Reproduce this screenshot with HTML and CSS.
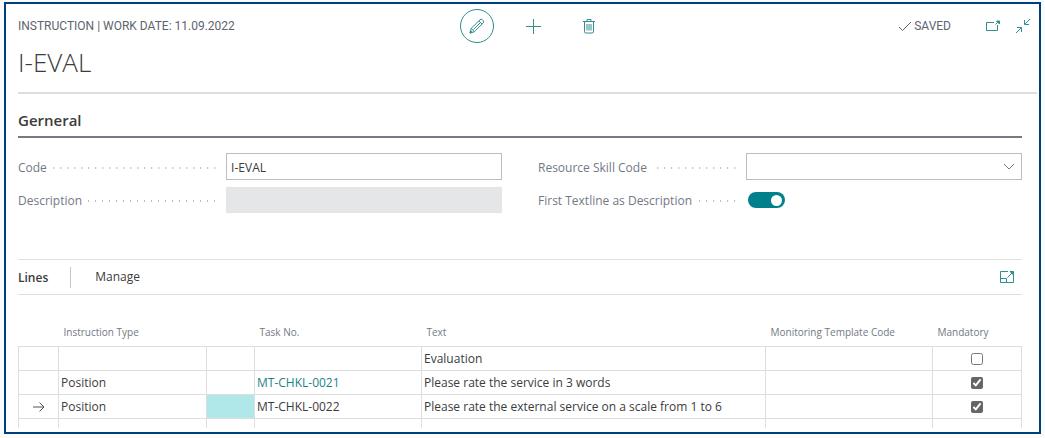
FILE: index.html
```html
<!DOCTYPE html>
<html lang="en">
<head>
    <meta charset="UTF-8">
    <meta name="viewport" content="width=device-width, initial-scale=1.0">
    <title>Instruction - I-EVAL</title>
    <link rel="stylesheet" href="styles.css">
</head>
<body>
    <main class="card">
        <header class="card-header">
            <div class="topbar">
                <div class="caption">INSTRUCTION | WORK DATE: 11.09.2022</div>
                <div class="actions">
                    <button type="button" class="action active" aria-label="Edit">
                        <svg width="16" height="16" viewBox="0 0 16 16"><path d="M1 15l1.200-4.600L11 1.800a1.700 1.700 0 0 1 2.400 0l.8.8a1.700 1.700 0 0 1 0 2.400L5.400 13.700zM2.200 10.400l3.200 3.300M10 3l3 3M4.500 11.500L11 5"/><path class="solid" d="M1 15l.6-2.200 1.600 1.600z"/></svg>
                    </button>
                    <button type="button" class="action" aria-label="New">
                        <svg width="15" height="15" viewBox="0 0 15 15"><path d="M7.500 0v15M0 7.500h15"/></svg>
                    </button>
                    <button type="button" class="action" aria-label="Delete">
                        <svg width="14" height="16" viewBox="0 0 14 16"><path d="M1 3.500h12M5 3.500V1.500h4v2M2.500 3.500v10.200a1.300 1.300 0 0 0 1.300 1.300h6.400a1.300 1.300 0 0 0 1.300-1.300V3.500M5 6v6.500M7 6v6.500M9 6v6.500"/></svg>
                    </button>
                </div>
                <div class="status">
                    <svg width="14" height="12" viewBox="0 0 14 12"><path d="M1 7l3.500 3.500L13 2"/></svg>
                    <span class="saved">SAVED</span>
                    <button type="button" class="window-button" aria-label="Open in new window">
                        <svg width="16" height="14" viewBox="0 0 16 14"><path d="M9 3.500H1.500v8h11V6M10.500 5.500l3-3"/><path class="solid" d="M11.500 2h3v3z"/></svg>
                    </button>
                    <button type="button" class="window-button" aria-label="Collapse">
                        <svg width="16" height="16" viewBox="0 0 16 16"><path d="M15 1l-5 5M9.500 2v4.500H14M1 15l5-5M2 9.500h4.500V14"/></svg>
                    </button>
                </div>
            </div>
            <h1>I-EVAL</h1>
        </header>

        <section class="general">
            <h2>Gerneral</h2>
            <div class="fields">
                <div class="field">
                    <label for="code">Code</label>
                    <input type="text" id="code" class="box" value="I-EVAL">
                </div>
                <div class="field">
                    <label for="skillCode">Resource Skill Code</label>
                    <select id="skillCode" class="box">
                        <option value=""></option>
                    </select>
                </div>
                <div class="field">
                    <label for="description">Description</label>
                    <input type="text" id="description" class="box" disabled>
                </div>
                <div class="field">
                    <label for="firstTextline">First Textline as Description</label>
                    <input type="checkbox" id="firstTextline" class="toggle" role="switch" checked>
                </div>
            </div>
        </section>

        <section class="lines">
            <div class="lines-bar">
                <h3>Lines</h3>
                <button type="button" class="manage">Manage</button>
                <button type="button" class="window-button" aria-label="Expand lines">
                    <svg width="14" height="14" viewBox="0 0 14 14"><path d="M8 1.500H.5v11h13V5M.5 8.500h6v4M7.500 7.500l5-5"/><path class="solid" d="M10 1.500h3.500V5z"/></svg>
                </button>
            </div>
            <table>
                <colgroup>
                    <col class="col-marker">
                    <col class="col-type">
                    <col class="col-menu">
                    <col class="col-code">
                    <col>
                    <col class="col-code">
                    <col class="col-mandatory">
                </colgroup>
                <thead>
                    <tr>
                        <th></th>
                        <th>Instruction Type</th>
                        <th></th>
                        <th>Task No.</th>
                        <th>Text</th>
                        <th>Monitoring Template Code</th>
                        <th>Mandatory</th>
                    </tr>
                </thead>
                <tbody>
                    <tr>
                        <td></td>
                        <td></td>
                        <td></td>
                        <td></td>
                        <td>Evaluation</td>
                        <td></td>
                        <td class="check"><input type="checkbox" aria-label="Mandatory"></td>
                    </tr>
                    <tr>
                        <td></td>
                        <td>Position</td>
                        <td></td>
                        <td><a href="#">MT-CHKL-0021</a></td>
                        <td>Please rate the service in 3 words</td>
                        <td></td>
                        <td class="check"><input type="checkbox" aria-label="Mandatory" checked></td>
                    </tr>
                    <tr>
                        <td class="marker">
                            <svg width="12" height="12" viewBox="0 0 12 12"><path d="M0 6h11M6.500 1.500L11 6l-4.500 4.500"/></svg>
                        </td>
                        <td>Position</td>
                        <td class="selected"></td>
                        <td>MT-CHKL-0022</td>
                        <td>Please rate the external service on a scale from 1 to 6</td>
                        <td></td>
                        <td class="check"><input type="checkbox" aria-label="Mandatory" checked></td>
                    </tr>
                    <tr class="cut">
                        <td></td>
                        <td></td>
                        <td></td>
                        <td></td>
                        <td></td>
                        <td></td>
                        <td></td>
                    </tr>
                </tbody>
            </table>
        </section>
    </main>
</body>
</html>
```

FILE: styles.css
```css
* {
    box-sizing: border-box;
}
body {
    margin: 0;
    padding: 2px 4px;
    background-color: #fafbfc;
    color: #3b3b3b;
    font-family: "Segoe UI", "Open Sans", sans-serif;
    font-size: 12px;
    line-height: 16px;
}
h1, h2, h3 {
    margin: 0;
}
button {
    padding: 0;
    border: none;
    background: none;
    font: inherit;
    color: inherit;
    cursor: pointer;
}
svg {
    display: block;
    fill: none;
    stroke: #2f8e90;
    stroke-width: 1;
}
.solid {
    fill: #2f8e90;
}
.card {
    border: 2px solid #003f7d;
    background-color: #fff;
    padding-bottom: 4px;
}

/* header */
.card-header {
    margin: 0 2px 0 12px;
    border-bottom: 2px solid #dedede;
    padding: 5px 0 12px;
}
.topbar {
    display: grid;
    grid-template-columns: 51fr auto 49fr;
    align-items: center;
    padding-right: 6px;
    font-family: Bahnschrift, Roboto, sans-serif;
    font-weight: 400;
    color: #5c6470;
}
.actions {
    display: flex;
    gap: 22px;
}
.action {
    display: flex;
    align-items: center;
    justify-content: center;
    width: 34px;
    height: 34px;
    border-radius: 50%;
}
.active {
    border: 1px solid #2f8e90;
}
.status {
    display: flex;
    align-items: center;
    justify-content: flex-end;
}
.status > svg {
    stroke: #5c6470;
    margin-right: 2px;
}
.saved {
    margin-right: 20px;
}
.status .window-button {
    margin-left: 14px;
}
h1 {
    padding-top: 1px;
    font-size: 26px;
    line-height: 36px;
    font-weight: 300;
}

/* general fields */
.general, .lines {
    margin: 0 17px 0 12px;
}
h2 {
    border-bottom: 2px solid #747a82;
    padding: 14px 0 4px;
    font-size: 15px;
    line-height: 24px;
    font-weight: 600;
}
.fields {
    display: grid;
    grid-template-columns: 1fr 1fr;
    column-gap: 36px;
    row-gap: 8px;
    margin-top: 15px;
}
.field {
    display: grid;
    grid-template-columns: 43fr 57fr;
    align-items: center;
    height: 26px;
}
.field label {
    display: flex;
    align-items: center;
    padding-right: 8px;
    padding-top: 2px;
    color: #717985;
}
/* dotted leader between the label and its box */
.field label::after {
    content: "";
    flex: 1;
    height: 2px;
    margin-left: 6px;
    background: radial-gradient(circle, #b4b9bf 1px, transparent 1px) right center / 7px 2px repeat-x;
}
.box {
    width: 100%;
    height: 27px;
    border: 1px solid #bcbdbf;
    border-radius: 0;
    padding: 2px 4px 0;
    background-color: #fff;
    font: inherit;
    color: inherit;
}
.box:disabled {
    height: 26px;
    border-color: #e5e6e8;
    background-color: #e5e6e8;
}
select.box {
    appearance: none;
    background: url("data:image/svg+xml,%3Csvg xmlns='http://www.w3.org/2000/svg' width='12' height='8' fill='none' stroke='%23777'%3E%3Cpath d='M1 1l5 5 5-5'/%3E%3C/svg%3E") right 6px center no-repeat;
}
.toggle {
    appearance: none;
    display: flex;
    align-items: center;
    justify-content: flex-end;
    width: 37px;
    height: 16px;
    margin: 0 0 0 2px;
    border-radius: 8px;
    padding: 0 3px;
    background-color: #00808a;
}
.toggle::before {
    content: "";
    width: 11px;
    height: 11px;
    border-radius: 50%;
    background-color: #fff;
}

/* lines */
.lines {
    margin-top: 46px;
}
.lines-bar {
    display: flex;
    align-items: center;
    height: 36px;
    border-top: 1px solid #e0e0e0;
    border-bottom: 1px solid #e0e0e0;
    padding-right: 8px;
}
h3 {
    border-right: 1px solid #c8c8c8;
    padding-right: 22px;
    font-size: 12px;
    line-height: 21px;
    font-weight: 600;
}
.manage {
    margin: 0 auto 0 24px;
}
table {
    width: 100%;
    margin-top: 21px;
    table-layout: fixed;
    border-collapse: collapse;
}
.col-marker {
    width: 40px;
}
.col-type {
    width: 148px;
}
.col-menu {
    width: 48px;
}
.col-code {
    width: 167px;
}
.col-mandatory {
    width: 89px;
}
th {
    height: 30px;
    padding: 2px 5px 0;
    font-size: 10px;
    font-weight: 400;
    text-align: left;
    white-space: nowrap;
    color: #717985;
}
td {
    height: 24px;
    border: 1px solid #dedede;
    padding: 1px 2px 0;
    line-height: 20px;
    white-space: nowrap;
}
td a {
    color: #1d8387;
    text-decoration: none;
}
.marker svg {
    margin: 0 auto;
    stroke: #555;
}
.selected {
    background-color: #b0e8ea;
}
.check {
    text-align: center;
}
.check input {
    display: block;
    width: 12px;
    height: 12px;
    margin: 0 auto;
    accent-color: #666;
}
.cut td {
    height: 10px;
    border-bottom: none;
    padding: 0;
}
```
